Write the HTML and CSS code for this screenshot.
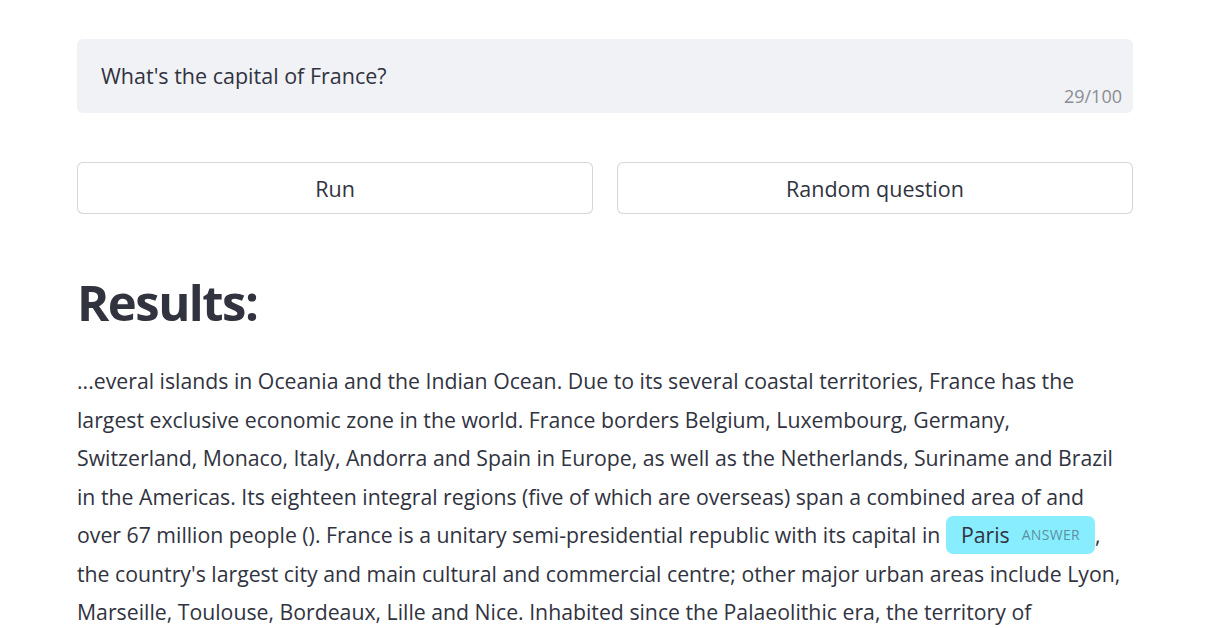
FILE: index.html
```html
<!DOCTYPE html>
<html lang="en">
<head>
<meta charset="utf-8">
<title>Question answering</title>
<link rel="stylesheet" href="styles.css">
</head>
<body>
<main class="main">
  <div class="field">
    <textarea class="query" aria-label="Question" maxlength="100">What's the capital of France?</textarea>
    <span class="counter">29/100</span>
  </div>
  <div class="actions">
    <button class="btn" type="button">Run</button>
    <button class="btn" type="button">Random question</button>
  </div>
  <h1 class="title">Results:</h1>
  <p class="passage">...everal islands in Oceania and the Indian Ocean. Due to its several coastal territories, France has the<br>largest exclusive economic zone in the world. France borders Belgium, Luxembourg, Germany,<br>Switzerland, Monaco, Italy, Andorra and Spain in Europe, as well as the Netherlands, Suriname and Brazil<br>in the Americas. Its eighteen integral regions (five of which are overseas) span a combined area of and<br>over 67 million people (). France is a unitary semi-presidential republic with its capital in <span class="answer"><span class="answer-text">Paris</span><span class="answer-label">answer</span></span>,<br>the country's largest city and main cultural and commercial centre; other major urban areas include Lyon,<br>Marseille, Toulouse, Bordeaux, Lille and Nice. Inhabited since the Palaeolithic era, the territory of</p>
</main>
</body>
</html>
```
FILE: styles.css
```css
html, body {
  margin: 0;
  padding: 0;
  overflow: hidden;
  background: #ffffff;
}

body {
  font-family: "Open Sans", "Liberation Sans", sans-serif;
  color: #31333f;
}

.main {
  width: 1056px;
  margin-left: 77px;
  padding-top: 39px;
}

.field {
  position: relative;
}

.query {
  display: block;
  box-sizing: border-box;
  width: 100%;
  height: 74px;
  margin: 0;
  padding: 21px 24px 0;
  border: none;
  border-radius: 6px;
  background: #f0f2f6;
  color: #31333f;
  font-family: inherit;
  font-size: 21.5px;
  line-height: 32px;
  resize: none;
  outline: none;
  overflow: hidden;
}

.counter {
  position: absolute;
  right: 11px;
  bottom: 6px;
  font-size: 18px;
  line-height: 22px;
  color: #8b8d93;
}

.actions {
  display: grid;
  grid-template-columns: 1fr 1fr;
  column-gap: 24px;
  margin-top: 49px;
}

.btn {
  box-sizing: border-box;
  height: 52px;
  margin: 0;
  padding: 0 16px;
  border: 1px solid rgba(49, 51, 63, 0.2);
  border-radius: 6px;
  background: #ffffff;
  color: #31333f;
  font-family: inherit;
  font-size: 21.5px;
  cursor: pointer;
}

.title {
  margin: 55px 0 0;
  font-size: 49px;
  font-weight: 700;
  line-height: 66px;
  letter-spacing: -1.5px;
}

.passage {
  margin: 27px 0 0;
  font-size: 21.25px;
  line-height: 38.5px;
  white-space: nowrap;
}

.answer {
  display: inline-flex;
  align-items: center;
  padding: 5px 15px;
  border-radius: 7px;
  background: #88eeff;
  line-height: 28px;
}

.answer-label {
  margin-left: 12px;
  font-size: 14px;
  line-height: 20px;
  text-transform: uppercase;
  letter-spacing: 0.3px;
  color: #5c909f;
}
```
